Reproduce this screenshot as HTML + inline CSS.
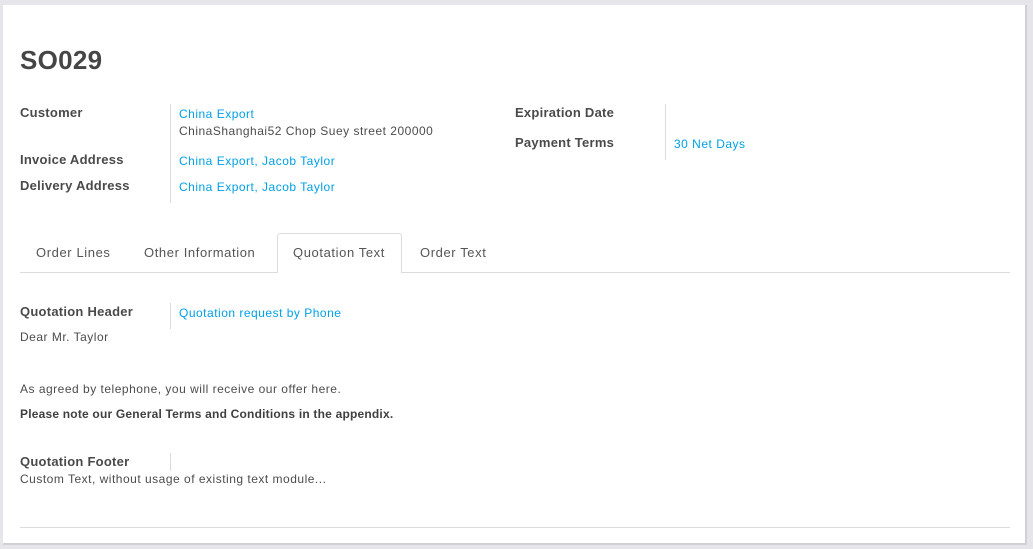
<!DOCTYPE html>
<html><head><meta charset="utf-8"><style>
*{margin:0;padding:0;box-sizing:border-box}
body{width:1033px;height:549px;background:#e6e6ea;font-family:"Liberation Sans",sans-serif;position:relative;overflow:hidden;color:#4c4c4c}
.card{position:absolute;left:3px;top:5px;width:1024px;height:540px;background:#fff;border-right:2px solid #d0d0d8;border-bottom:2px solid #d0d0d8}
.a{position:absolute;white-space:nowrap}
.lbl{font-weight:bold;font-size:13px;color:#4a4a4a;letter-spacing:0.25px}
.t{font-size:12px;color:#4c4c4c;letter-spacing:0.5px}
.lk{font-size:12px;color:#00a0e6;letter-spacing:0.5px}
.vl{position:absolute;width:1px;background:#dcdcdc}
.tab{font-size:13px;color:#555;letter-spacing:0.6px}
</style></head><body>
<div class="card"></div>
<div class="a" style="left:20px;top:45px;font-size:26px;font-weight:bold;color:#454545;letter-spacing:0.3px">SO029</div>

<div class="a lbl" style="left:20px;top:105px">Customer</div>
<div class="a lbl" style="left:20px;top:152px">Invoice Address</div>
<div class="a lbl" style="left:20px;top:178px">Delivery Address</div>
<div class="vl" style="left:170px;top:104px;height:99px"></div>
<div class="a lk" style="left:179px;top:107px">China Export</div>
<div class="a t" style="left:179px;top:124px">ChinaShanghai52 Chop Suey street 200000</div>
<div class="a lk" style="left:179px;top:154px">China Export, Jacob Taylor</div>
<div class="a lk" style="left:179px;top:180px">China Export, Jacob Taylor</div>

<div class="a lbl" style="left:515px;top:105px">Expiration Date</div>
<div class="a lbl" style="left:515px;top:135px">Payment Terms</div>
<div class="vl" style="left:665px;top:104px;height:56px"></div>
<div class="a lk" style="left:674px;top:137px">30 Net Days</div>

<div class="a" style="left:20px;top:272px;width:990px;height:1px;background:#dcdcdc"></div>
<div class="a" style="left:277px;top:233px;width:125px;height:40px;background:#fff;border:1px solid #dcdcdc;border-bottom:none;border-radius:3px 3px 0 0"></div>
<div class="a tab" style="left:36px;top:245px">Order Lines</div>
<div class="a tab" style="left:144px;top:245px">Other Information</div>
<div class="a tab" style="left:293px;top:245px">Quotation Text</div>
<div class="a tab" style="left:420px;top:245px">Order Text</div>

<div class="a lbl" style="left:20px;top:304px">Quotation Header</div>
<div class="vl" style="left:170px;top:303px;height:26px"></div>
<div class="a lk" style="left:179px;top:306px">Quotation request by Phone</div>
<div class="a t" style="left:20px;top:330px">Dear Mr. Taylor</div>
<div class="a t" style="left:20px;top:382px">As agreed by telephone, you will receive our offer here.</div>
<div class="a t" style="left:20px;top:407px;font-weight:bold;color:#404040;letter-spacing:0.2px">Please note our General Terms and Conditions in the appendix.</div>
<div class="a lbl" style="left:20px;top:454px">Quotation Footer</div>
<div class="vl" style="left:170px;top:453px;height:18px"></div>
<div class="a t" style="left:20px;top:472px">Custom Text, without usage of existing text module...</div>
<div class="a" style="left:20px;top:527px;width:990px;height:1px;background:#dcdcdc"></div>
</body></html>
